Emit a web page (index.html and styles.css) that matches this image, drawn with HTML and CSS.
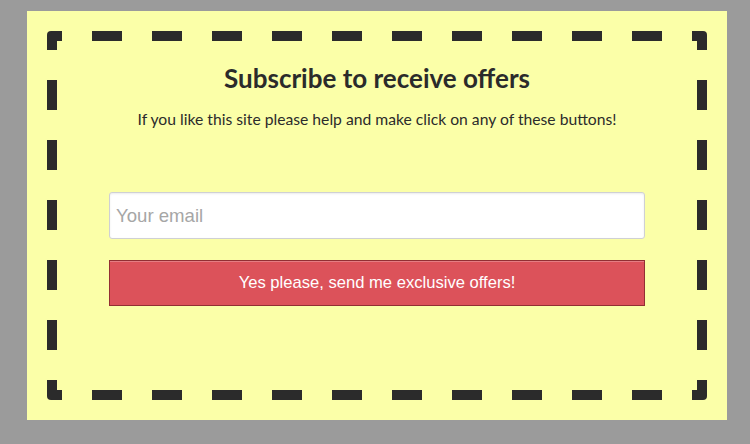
FILE: index.html
```html
<!DOCTYPE html>
<html lang="en">
<head>
<meta charset="utf-8">
<title>Subscribe</title>
<link rel="stylesheet" href="styles.css">
</head>
<body>
<div class="box">
  <div class="frame">
    <h1 class="title">Subscribe to receive offers</h1>
    <p class="subtitle">If you like this site please help and make click on any of these buttons!</p>
    <form class="form">
      <input class="email" type="email" placeholder="Your email">
      <button class="submit" type="button">Yes please, send me exclusive offers!</button>
    </form>
  </div>
</div>
</body>
</html>
```
FILE: styles.css
```css
html, body {
  margin: 0;
  padding: 0;
}
body {
  background: #9b9b9b;
  width: 750px;
  height: 444px;
  overflow: hidden;
  font-family: Lato, "Liberation Sans", sans-serif;
}
.box {
  margin: 11px 0 0 27px;
  width: 700px;
  height: 409px;
  box-sizing: border-box;
  padding: 20px;
  background: #fbffa8;
}
.frame {
  box-sizing: border-box;
  height: 369px;
  padding: 10px;
  border-radius: 4px;
  background-color: transparent;
  background-image:
    repeating-linear-gradient(90deg, #2b2b2b 0 15px, transparent 15px 45px, #2b2b2b 45px 60px),
    repeating-linear-gradient(90deg, #2b2b2b 0 15px, transparent 15px 45px, #2b2b2b 45px 60px),
    repeating-linear-gradient(180deg, #2b2b2b 0 19px, transparent 19px 49px, #2b2b2b 49px 60px),
    repeating-linear-gradient(180deg, #2b2b2b 0 19px, transparent 19px 49px, #2b2b2b 49px 60px);
  background-size: 100% 10px, 100% 10px, 10px 100%, 10px 100%;
  background-position: left top, left bottom, left top, right top;
  background-repeat: no-repeat;
  display: flex;
  flex-direction: column;
  align-items: center;
}
.title {
  margin: 22px 0 0;
  font-size: 26px;
  font-weight: 700;
  color: #2b2b2b;
  line-height: 30px;
}
.subtitle {
  margin: 16px 0 0;
  font-size: 15.7px;
  color: #2b2b2b;
  line-height: 20px;
}
.form {
  margin-top: 63px;
  width: 536px;
  display: flex;
  flex-direction: column;
  gap: 21px;
}
.email {
  box-sizing: border-box;
  height: 47px;
  width: 100%;
  margin: 0;
  padding: 0 6px;
  border: 1px solid #cfd0d4;
  border-radius: 3px;
  background: #fff;
  box-shadow: inset 0 1px 2px rgba(0,0,0,0.08);
  font-family: "Liberation Sans", Arial, sans-serif;
  font-size: 18.6px;
  color: #333;
}
.email::placeholder {
  color: #a6a6a6;
}
.submit {
  box-sizing: border-box;
  height: 46px;
  width: 100%;
  margin: 0;
  border: 1px solid #922f33;
  background: #dc525a;
  box-shadow: inset 0 1px 0 rgba(255,255,255,0.25);
  color: #fff;
  font-family: "Liberation Sans", Arial, sans-serif;
  font-size: 16.6px;
  cursor: pointer;
}
```
